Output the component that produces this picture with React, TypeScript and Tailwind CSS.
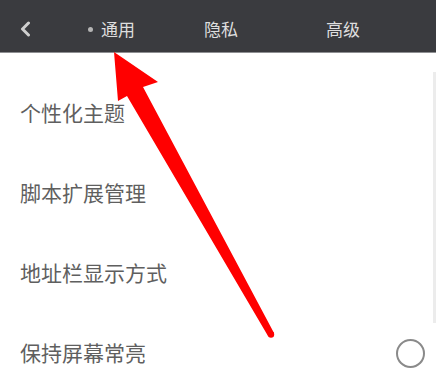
import React from 'react';

const items = ['个性化主题', '脚本扩展管理', '地址栏显示方式', '保持屏幕常亮'];

// 红色标注箭头（截图上的批注）
function Arrow() {
  return (
    <svg className="pointer-events-none absolute inset-0" width="436" height="382" viewBox="0 0 436 382">
      <polygon
        points="114,52 158,82 143,87 274,333 268,336 127,96 118,101"
        fill="#ff0000"
      />
      <circle cx="271" cy="334.5" r="3.2" fill="#ff0000" />
    </svg>
  );
}

export default function App() {
  return (
    <div
      className="relative h-[382px] w-[436px] overflow-hidden bg-white"
      style={{ fontFamily: '"Noto Sans CJK SC", "Noto Sans", sans-serif' }}
    >
      {/* 顶部导航 */}
      <div className="flex h-[53px] items-center border-b border-[#8e8f92] bg-[#3a3b3f] pt-[6px] text-[17px] text-[#dedede]">
        <svg className="ml-[20px]" width="11" height="16" viewBox="0 0 11 16">
          <path d="M8.5 2 L2.5 8 L8.5 14" fill="none" stroke="#cfcfcf" strokeWidth="3" strokeLinecap="round" strokeLinejoin="round" />
        </svg>
        <div className="ml-[57px] flex items-center">
          <span className="mr-[8px] h-[5px] w-[5px] rounded-full bg-[#b5b5b5]" />
          <span>通用</span>
        </div>
        <span className="ml-[69px]">隐私</span>
        <span className="ml-[88px]">高级</span>
      </div>

      {/* 设置列表 */}
      <div className="relative pt-[20px]">
        {items.map((label, i) => (
          <div key={label} className="flex h-[80px] items-center justify-between pl-[20px] pr-[11px]">
            <span className="text-[21px] text-[#5f5f5f]">{label}</span>
            {i === items.length - 1 && (
              <span className="h-[29px] w-[29px] rounded-full border-2 border-[#8a8a8a]" />
            )}
          </div>
        ))}
        <div className="absolute right-0 top-[19px] h-[251px] w-[3px] bg-[#ececec]" />
      </div>

      <Arrow />
    </div>
  );
}
